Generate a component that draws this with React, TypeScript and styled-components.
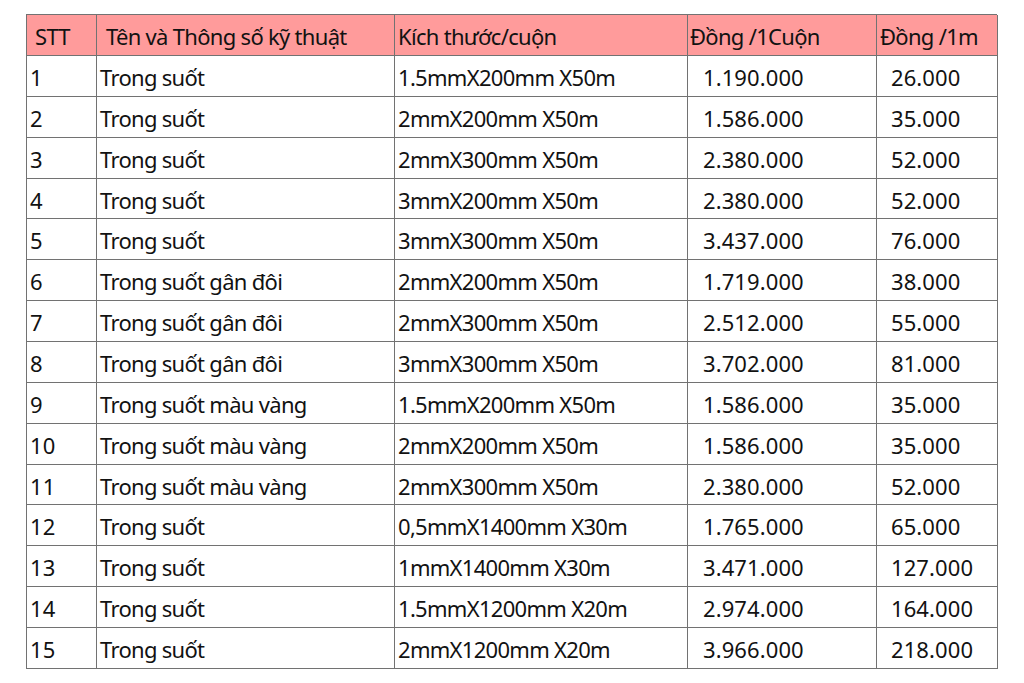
import React from "react";
import styled, { createGlobalStyle } from "styled-components";

const Global = createGlobalStyle`
  html, body { margin: 0; padding: 0; background: #ffffff; }
  body { font-family: "Noto Sans", "DejaVu Sans", sans-serif; }
`;

const Page = styled.div`
  width: 1024px;
  height: 683px;
  padding: 14px 0 0 26px;
  box-sizing: border-box;
`;

const Grid = styled.div`
  display: grid;
  width: 971px;
  grid-template-columns: 70px 298px 293px 189px 121px;
  grid-template-rows: 41px repeat(15, 40.87px);
  border-top: 1px solid #727272;
  border-left: 1px solid #727272;
  box-sizing: border-box;
`;

const Cell = styled.div<{ $head?: boolean; $num?: boolean; $pad: number }>`
  display: flex;
  align-items: center;
  box-sizing: border-box;
  border-right: 1px solid #727272;
  border-bottom: 1px solid #727272;
  background: ${(p) => (p.$head ? "#ff9b9b" : "#ffffff")};
  padding-left: ${(p) => p.$pad}px;
  padding-top: 2px;
  font-size: 22px;
  letter-spacing: ${(p) => (p.$num ? "0.1px" : "-0.7px")};
  color: #121212;
  white-space: nowrap;
  overflow: hidden;
`;

const rows: [string, string, string, string][] = [
  ["Trong suốt", "1.5mmX200mm X50m", "1.190.000", "26.000"],
  ["Trong suốt", "2mmX200mm X50m", "1.586.000", "35.000"],
  ["Trong suốt", "2mmX300mm X50m", "2.380.000", "52.000"],
  ["Trong suốt", "3mmX200mm X50m", "2.380.000", "52.000"],
  ["Trong suốt", "3mmX300mm X50m", "3.437.000", "76.000"],
  ["Trong suốt gân đôi", "2mmX200mm X50m", "1.719.000", "38.000"],
  ["Trong suốt gân đôi", "2mmX300mm X50m", "2.512.000", "55.000"],
  ["Trong suốt gân đôi", "3mmX300mm X50m", "3.702.000", "81.000"],
  ["Trong suốt màu vàng", "1.5mmX200mm X50m", "1.586.000", "35.000"],
  ["Trong suốt màu vàng", "2mmX200mm X50m", "1.586.000", "35.000"],
  ["Trong suốt màu vàng", "2mmX300mm X50m", "2.380.000", "52.000"],
  ["Trong suốt", "0,5mmX1400mm X30m", "1.765.000", "65.000"],
  ["Trong suốt", "1mmX1400mm X30m", "3.471.000", "127.000"],
  ["Trong suốt", "1.5mmX1200mm X20m", "2.974.000", "164.000"],
  ["Trong suốt", "2mmX1200mm X20m", "3.966.000", "218.000"],
];

export default function App() {
  return (
    <>
      <Global />
      <Page>
        <Grid>
          <Cell $head $pad={8}>STT</Cell>
          <Cell $head $pad={9}>Tên và Thông số kỹ thuật</Cell>
          <Cell $head $pad={3}>Kích thước/cuộn</Cell>
          <Cell $head $pad={2}>Đồng /1Cuộn</Cell>
          <Cell $head $pad={3}>Đồng /1m</Cell>
          {rows.map((r, i) => (
            <React.Fragment key={i}>
              <Cell $pad={3} $num>{i + 1}</Cell>
              <Cell $pad={3}>{r[0]}</Cell>
              <Cell $pad={3}>{r[1]}</Cell>
              <Cell $pad={15} $num>{r[2]}</Cell>
              <Cell $pad={14} $num>{r[3]}</Cell>
            </React.Fragment>
          ))}
        </Grid>
      </Page>
    </>
  );
}
